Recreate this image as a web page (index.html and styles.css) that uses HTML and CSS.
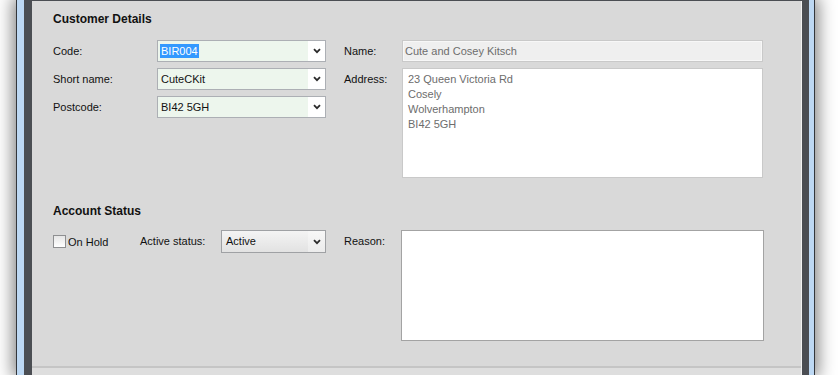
FILE: index.html
```html
<!doctype html>
<html lang="en">
  <head>
    <meta charset="utf-8" />
    <title>Customer Details</title>
    <meta name="viewport" content="width=device-width, initial-scale=1" />
    <link rel="stylesheet" href="styles.css">
  </head>

  <body>
    <div class="window">
      <div class="chrome">
        <div class="content">
          <div class="panel">
            <div class="section-title">Customer Details</div>
            <div class="details">
              <div class="left-col">
                <label class="label">Code:</label>
                <div class="combo">
                  <span class="combo-text"><span class="sel">BIR004</span></span>
                  <span class="combo-btn">
                    <svg width="8" height="6" viewBox="0 0 8 6"><polyline points="1,1.2 4,4.2 7,1.2" fill="none" stroke="#2b2b2b" stroke-width="1.8" /></svg>
                  </span>
                </div>
                <label class="label">Short name:</label>
                <div class="combo">
                  <span class="combo-text">CuteCKit</span>
                  <span class="combo-btn">
                    <svg width="8" height="6" viewBox="0 0 8 6"><polyline points="1,1.2 4,4.2 7,1.2" fill="none" stroke="#2b2b2b" stroke-width="1.8" /></svg>
                  </span>
                </div>
                <label class="label">Postcode:</label>
                <div class="combo">
                  <span class="combo-text">BI42 5GH</span>
                  <span class="combo-btn">
                    <svg width="8" height="6" viewBox="0 0 8 6"><polyline points="1,1.2 4,4.2 7,1.2" fill="none" stroke="#2b2b2b" stroke-width="1.8" /></svg>
                  </span>
                </div>
              </div>
              <div class="right-col">
                <label class="label">Name:</label>
                <div class="readonly-field">Cute and Cosey Kitsch</div>
                <label class="label label-top">Address:</label>
                <div class="address-box">
                  <div>23 Queen Victoria Rd</div>
                  <div>Cosely</div>
                  <div>Wolverhampton</div>
                  <div>BI42 5GH</div>
                </div>
              </div>
            </div>

            <div class="section-title status-title">Account Status</div>
            <div class="status-row">
              <div class="hold">
                <span class="checkbox"></span>
                <span>On Hold</span>
              </div>
              <label class="label status-label">Active status:</label>
              <div class="combo combo-status">
                <span class="combo-text">Active</span>
                <span class="combo-btn">
                  <svg width="8" height="6" viewBox="0 0 8 6"><polyline points="1,1.2 4,4.2 7,1.2" fill="none" stroke="#2b2b2b" stroke-width="1.8" /></svg>
                </span>
              </div>
              <label class="label reason-label">Reason:</label>
              <div class="reason-box"></div>
            </div>
          </div>
          <div class="footer"></div>
        </div>
      </div>
    </div>
  </body>
</html>
```

FILE: styles.css
```css
html,
body {
  margin: 0;
  padding: 0;
  background: #fff;
  height: 375px;
  overflow: hidden;
  font-family: 'Liberation Sans', Arial, sans-serif;
  font-size: 11px;
  color: #111;
}
.window {
  margin-left: 16px;
  width: 799px;
  height: 375px;
  border: 1px solid #33363b;
  border-top: none;
  border-bottom: none;
  background: #bdd8f3;
  padding: 0 5px 0 7px;
  box-sizing: border-box;
  box-shadow: 0 0 16px 3px rgba(0, 0, 0, 0.5);
  display: flex;
}
.chrome {
  flex: 1;
  background: #4b4e53;
  padding: 1px 7px 0 8px;
  display: flex;
}
.content {
  flex: 1;
  background: #d9d9d9;
  border-right: 1px solid #f2f2f2;
  display: flex;
  flex-direction: column;
}
.panel {
  padding: 10px 0 0 21px;
}
.section-title {
  font-size: 12px;
  font-weight: bold;
  line-height: 16px;
  color: #111;
  margin-bottom: 13px;
}
.details {
  display: flex;
  gap: 18px;
}
.left-col {
  display: grid;
  grid-template-columns: 104px 169px;
  grid-auto-rows: 22px;
  row-gap: 6px;
  align-items: center;
  align-self: flex-start;
}
.right-col {
  display: grid;
  grid-template-columns: 58px 361px;
  row-gap: 6px;
  align-items: center;
}
.label {
  line-height: 14px;
  color: #111;
}
.label-top {
  align-self: start;
  margin-top: 4px;
}
.combo {
  height: 22px;
  box-sizing: border-box;
  border: 1px solid #acafb4;
  display: flex;
  background: #fff;
}
.combo-text {
  flex: 1;
  background: #edf6ed;
  padding-left: 3px;
  line-height: 20px;
  color: #111;
}
.sel {
  display: inline-block;
  margin-left: -1px;
  padding: 0 1px;
  line-height: 14px;
  background: #3399ff;
  color: #fff;
}
.combo-btn {
  width: 17px;
  display: flex;
  align-items: center;
  justify-content: center;
}
.readonly-field {
  height: 22px;
  box-sizing: border-box;
  border: 1px solid #c9c9c9;
  box-shadow: inset 0 0 0 1px #f7f7f7;
  background: #efefef;
  color: #6d6d6d;
  line-height: 20px;
  padding-left: 2px;
}
.address-box {
  height: 110px;
  box-sizing: border-box;
  border: 1px solid #c9c9c9;
  background: #fff;
  color: #6d6d6d;
  line-height: 15px;
  padding: 3px 0 0 5px;
}
.status-title {
  margin-top: 25px;
  margin-bottom: 11px;
}
.status-row {
  display: flex;
  align-items: flex-start;
}
.hold {
  width: 87px;
  height: 23px;
  display: flex;
  align-items: center;
  gap: 2px;
}
.checkbox {
  width: 13px;
  height: 13px;
  box-sizing: border-box;
  border: 1px solid #8e8f91;
  background: linear-gradient(#e6e6e6, #fff);
}
.status-label {
  width: 81px;
  line-height: 23px;
}
.combo-status {
  width: 105px;
  height: 23px;
  border-color: #9fa1a4;
}
.combo-status .combo-text {
  background: linear-gradient(#f4f4f4, #e2e2e2);
  line-height: 21px;
  padding-left: 4px;
}
.combo-status .combo-btn {
  background: linear-gradient(#f7f7f7, #ececec);
}
.reason-label {
  margin-left: 18px;
  width: 57px;
  line-height: 23px;
}
.reason-box {
  width: 363px;
  height: 111px;
  box-sizing: border-box;
  border: 1px solid #a3a3a3;
  background: #fff;
}
.footer {
  margin-top: 25px;
  flex: 1;
  border-top: 2px solid #c5c5c5;
  background: #dedede;
}
```
